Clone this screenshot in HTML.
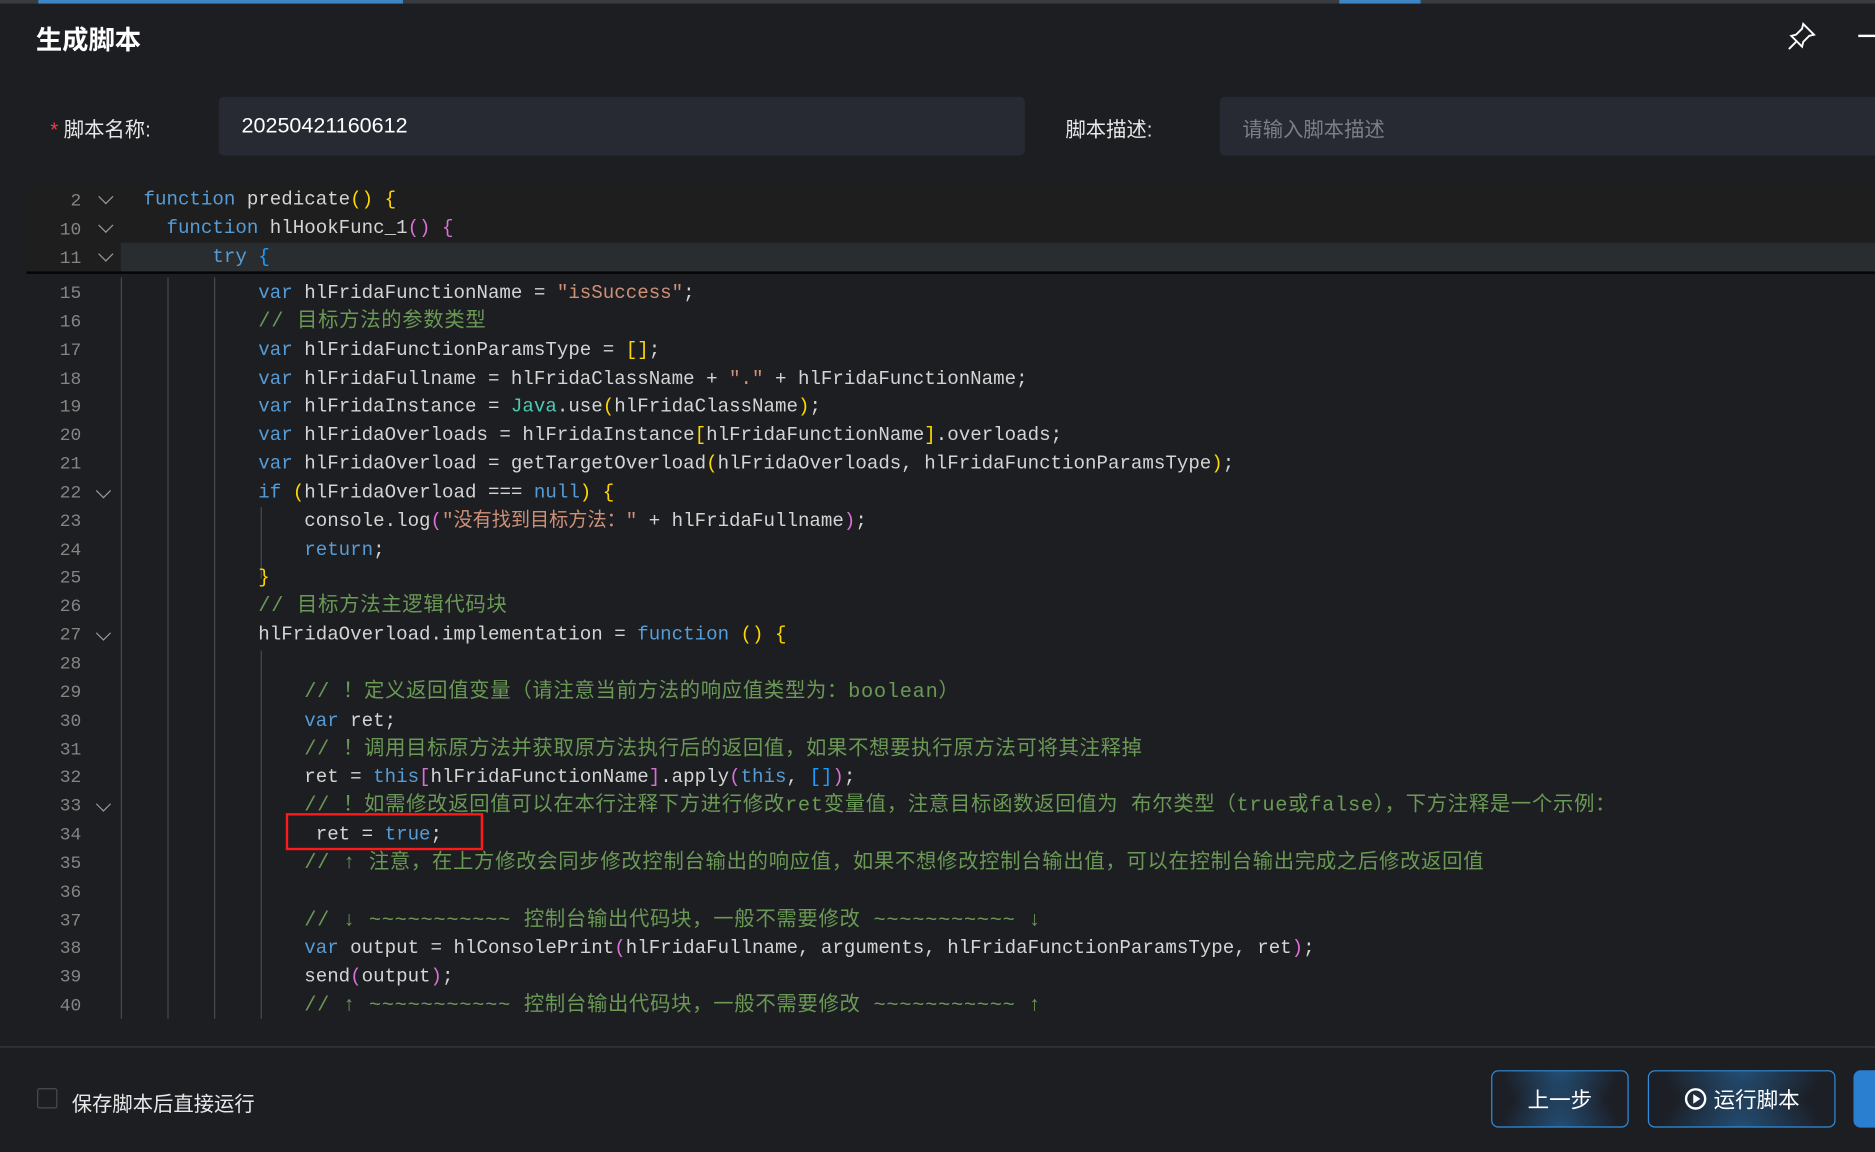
<!DOCTYPE html>
<html><head><meta charset="utf-8">
<style>
html,body{margin:0;padding:0;width:1875px;height:1152px;overflow:hidden;background:#1e1e1e;}
#w{position:absolute;left:0;top:0;width:1568px;height:963px;transform:scale(1.19579);transform-origin:0 0;background:#1d1e22;font-family:"Liberation Sans","Noto Sans CJK SC",sans-serif;color:#e8e8e8;overflow:hidden;}
.a{position:absolute;}
.code{font-family:"Liberation Mono","Noto Sans CJK SC",monospace;font-size:16px;color:#d4d4d4;white-space:pre;line-height:23.84px;}
.k{color:#569cd6}.s{color:#ce9178}.c{color:#6a9955;font-size:17px;letter-spacing:0.6px}.y{color:#ffd700}.p{color:#da70d6}.b{color:#179fff}.g{color:#4ec9b0}
.chev{position:absolute;width:8px;height:8px;border-right:1.5px solid #9a9a9a;border-bottom:1.5px solid #9a9a9a;transform:rotate(45deg);}
.gd{position:absolute;width:1px;background:#4a4a4a;top:232px;height:620px;}
.btn{position:absolute;top:895px;height:48px;border:1px solid #2f8fe0;border-radius:6px;background:radial-gradient(ellipse at 50% 0%,rgba(40,110,170,.6),transparent 60%),radial-gradient(ellipse at 50% 100%,rgba(40,110,170,.6),transparent 60%),#1c1f26;color:#fff;font-size:18px;display:flex;align-items:center;justify-content:center;box-sizing:border-box;}
</style></head><body><div id="w">
<div class="a" style="left:0;top:0;width:1568px;height:3px;background:#3a3b3e"></div>
<div class="a" style="left:32px;top:0;width:305px;height:3px;background:#3d86c6"></div>
<div class="a" style="left:1120px;top:0;width:68px;height:3px;background:#3d86c6"></div>
<div class="a" style="left:30px;top:16px;font-size:22px;font-weight:bold;color:#fff">生成脚本</div>
<svg class="a" style="left:1494px;top:17px" width="26" height="26" viewBox="0 0 26 26" fill="none" stroke="#fff" stroke-width="1.6"><path d="M14 3 L23 12 L19 13 L14 18 L13 22 L4 13 L8 12 L13 7 Z"/><path d="M8 18 L2 24"/></svg>
<div class="a" style="left:1554px;top:29px;width:14px;height:2px;background:#fff"></div>

<div class="a" style="left:42px;top:94px;font-size:17px"><span style="color:#f04040">*</span> 脚本名称:</div>
<div class="a" style="left:183px;top:81px;width:674px;height:49px;background:#282a33;border-radius:4px"></div>
<div class="a" style="left:202px;top:95px;font-size:18px;color:#fff">20250421160612</div>
<div class="a" style="left:891px;top:94px;font-size:17px">脚本描述:</div>
<div class="a" style="left:1020px;top:81px;width:560px;height:49px;background:#282a33;border-radius:4px"></div>
<div class="a" style="left:1039px;top:94px;font-size:17px;color:#7d7f86">请输入脚本描述</div>

<div class="gd" style="left:101px"></div><div class="gd" style="left:140px"></div><div class="gd" style="left:179px"></div>
<div class="gd" style="left:218px;top:424px;height:60px"></div>
<div class="gd" style="left:218px;top:544px;height:308px"></div>

<div class="code a" style="left:120px;top:234px">          <span class="k">var</span> hlFridaFunctionName = <span class="s">"isSuccess"</span>;
          <span class="c">// 目标方法的参数类型</span>
          <span class="k">var</span> hlFridaFunctionParamsType = <span class="y">[]</span>;
          <span class="k">var</span> hlFridaFullname = hlFridaClassName + <span class="s">"."</span> + hlFridaFunctionName;
          <span class="k">var</span> hlFridaInstance = <span class="g">Java</span>.use<span class="y">(</span>hlFridaClassName<span class="y">)</span>;
          <span class="k">var</span> hlFridaOverloads = hlFridaInstance<span class="y">[</span>hlFridaFunctionName<span class="y">]</span>.overloads;
          <span class="k">var</span> hlFridaOverload = getTargetOverload<span class="y">(</span>hlFridaOverloads, hlFridaFunctionParamsType<span class="y">)</span>;
          <span class="k">if</span> <span class="y">(</span>hlFridaOverload === <span class="k">null</span><span class="y">)</span> <span class="y">{</span>
              console.log<span class="p">(</span><span class="s">"没有找到目标方法："</span> + hlFridaFullname<span class="p">)</span>;
              <span class="k">return</span>;
          <span class="y">}</span>
          <span class="c">// 目标方法主逻辑代码块</span>
          hlFridaOverload.implementation = <span class="k">function</span> <span class="y">()</span> <span class="y">{</span>

              <span class="c">// ！定义返回值变量（请注意当前方法的响应值类型为：boolean）</span>
              <span class="k">var</span> ret;
              <span class="c">// ！调用目标原方法并获取原方法执行后的返回值，如果不想要执行原方法可将其注释掉</span>
              ret = <span class="k">this</span><span class="p">[</span>hlFridaFunctionName<span class="p">]</span>.apply<span class="p">(</span><span class="k">this</span>, <span class="b">[]</span><span class="p">)</span>;
              <span class="c">// ！如需修改返回值可以在本行注释下方进行修改ret变量值，注意目标函数返回值为 布尔类型（true或false），下方注释是一个示例：</span>
               ret = <span class="k">true</span>;
              <span class="c">// ↑ 注意，在上方修改会同步修改控制台输出的响应值，如果不想修改控制台输出值，可以在控制台输出完成之后修改返回值</span>

              <span class="c">// ↓ ~~~~~~~~~~~ 控制台输出代码块，一般不需要修改 ~~~~~~~~~~~ ↓</span>
              <span class="k">var</span> output = hlConsolePrint<span class="p">(</span>hlFridaFullname, arguments, hlFridaFunctionParamsType, ret<span class="p">)</span>;
              send<span class="p">(</span>output<span class="p">)</span>;
              <span class="c">// ↑ ~~~~~~~~~~~ 控制台输出代码块，一般不需要修改 ~~~~~~~~~~~ ↑</span></div>
<div class="a" style="left:239px;top:680px;width:161px;height:27px;border:2px solid #ff1a1a"></div>

<div class="code a" style="left:30px;top:234px;width:38px;text-align:right;color:#858585;font-size:15px">15
16
17
18
19
20
21
22
23
24
25
26
27
28
29
30
31
32
33
34
35
36
37
38
39
40</div>
<div class="chev" style="left:82px;top:406px"></div>
<div class="chev" style="left:82px;top:525px"></div>
<div class="chev" style="left:82px;top:668px"></div>

<div class="a" style="left:22px;top:155px;width:1546px;height:72px;background:#1e1e1e"></div>
<div class="a" style="left:101px;top:203px;width:1467px;height:24px;background:#2a2d30"></div>
<div class="a" style="left:22px;top:227px;width:1546px;height:2px;background:#050505"></div>
<div class="code a" style="left:30px;top:157px;width:38px;text-align:right;color:#858585;font-size:15px">2
10
11</div>
<div class="chev" style="left:84px;top:160px"></div>
<div class="chev" style="left:84px;top:184px"></div>
<div class="chev" style="left:84px;top:208px"></div>
<div class="code a" style="left:120px;top:156px"><span class="k">function</span> predicate<span class="y">()</span> <span class="y">{</span>
  <span class="k">function</span> hlHookFunc_1<span class="p">()</span> <span class="p">{</span>
      <span class="k">try</span> <span class="b">{</span></div>

<div class="a" style="left:0;top:875px;width:1568px;height:1px;background:#3a3b3e"></div>
<div class="a" style="left:31px;top:910px;width:17px;height:17px;border:1px solid #4a4c52;border-radius:2px;box-sizing:border-box"></div>
<div class="a" style="left:60px;top:909px;font-size:17px">保存脚本后直接运行</div>
<div class="btn" style="left:1247px;width:115px">上一步</div>
<div class="btn" style="left:1378px;width:157px"><svg width="20" height="20" viewBox="0 0 20 20" style="margin-right:5px"><circle cx="10" cy="10" r="8" fill="none" stroke="#fff" stroke-width="2"/><path d="M8 6 L14 10 L8 14 Z" fill="#fff"/></svg>运行脚本</div>
<div class="a" style="left:1550px;top:895px;width:30px;height:48px;border-radius:6px;background:#2a7fd0"></div>
</div></body></html>
